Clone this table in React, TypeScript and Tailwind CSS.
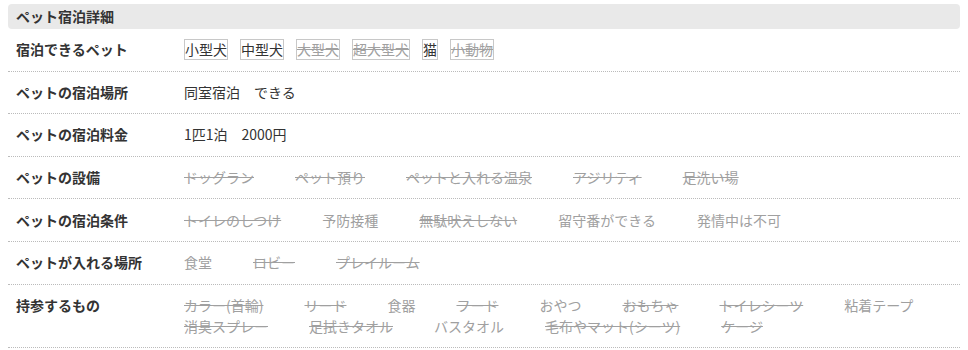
import React from 'react';

type Item = { name: string; state: 'on' | 'off' | 'gray' };

const on = (name: string): Item => ({ name, state: 'on' });
const off = (name: string): Item => ({ name, state: 'off' });
const gray = (name: string): Item => ({ name, state: 'gray' });

const pets: Item[] = [on('小型犬'), on('中型犬'), off('大型犬'), off('超大型犬'), on('猫'), off('小動物')];

const listRows: { label: string; items: Item[] }[] = [
  {
    label: 'ペットの設備',
    items: [off('ドッグラン'), off('ペット預り'), off('ペットと入れる温泉'), off('アジリティ'), off('足洗い場')],
  },
  {
    label: 'ペットの宿泊条件',
    items: [off('トイレのしつけ'), gray('予防接種'), off('無駄吠えしない'), gray('留守番ができる'), gray('発情中は不可')],
  },
  {
    label: 'ペットが入れる場所',
    items: [gray('食堂'), off('ロビー'), off('プレイルーム')],
  },
  {
    label: '持参するもの',
    items: [
      off('カラー(首輪)'),
      off('リード'),
      gray('食器'),
      off('フード'),
      gray('おやつ'),
      off('おもちゃ'),
      off('トイレシーツ'),
      gray('粘着テープ'),
      off('消臭スプレー'),
      off('足拭きタオル'),
      gray('バスタオル'),
      off('毛布やマット(シーツ)'),
      off('ケージ'),
    ],
  },
];

const itemClass = (state: Item['state']) =>
  state === 'on' ? 'text-[#333]' : state === 'off' ? 'text-[#a0a0a0] line-through' : 'text-[#a0a0a0]';

const Row = ({ label, children }: { label: string; children: React.ReactNode }) => (
  <div className="flex border-b border-dotted border-[#bbb] py-[10.3px] leading-[21px]">
    <div className="w-[176px] shrink-0 pl-2 font-bold text-[#333]">{label}</div>
    <div className="flex-1">{children}</div>
  </div>
);

const App = () => {
  return (
    <div className="min-h-[350px] bg-white px-2 pt-1 text-[14px] text-[#333] [font-family:'Noto_Sans_CJK_JP','Noto_Sans',sans-serif]">
      <div className="flex h-[25px] items-center rounded-[4px] bg-[#e9e9e9] pl-2 font-bold text-[#333]">ペット宿泊詳細</div>

      <Row label="宿泊できるペット">
        <div className="flex gap-x-3">
          {pets.map((pet) => (
            <span key={pet.name} className={`border border-[#c8c8c8] leading-[19px] ${itemClass(pet.state)}`}>
              {pet.name}
            </span>
          ))}
        </div>
      </Row>

      <Row label="ペットの宿泊場所">同室宿泊　できる</Row>
      <Row label="ペットの宿泊料金">1匹1泊　2000円</Row>

      {listRows.map((row) => (
        <Row key={row.label} label={row.label}>
          <div className="flex flex-wrap gap-x-[41px]">
            {row.items.map((item) => (
              <span key={item.name} className={itemClass(item.state)}>
                {item.name}
              </span>
            ))}
          </div>
        </Row>
      ))}
    </div>
  );
};

export default App;
